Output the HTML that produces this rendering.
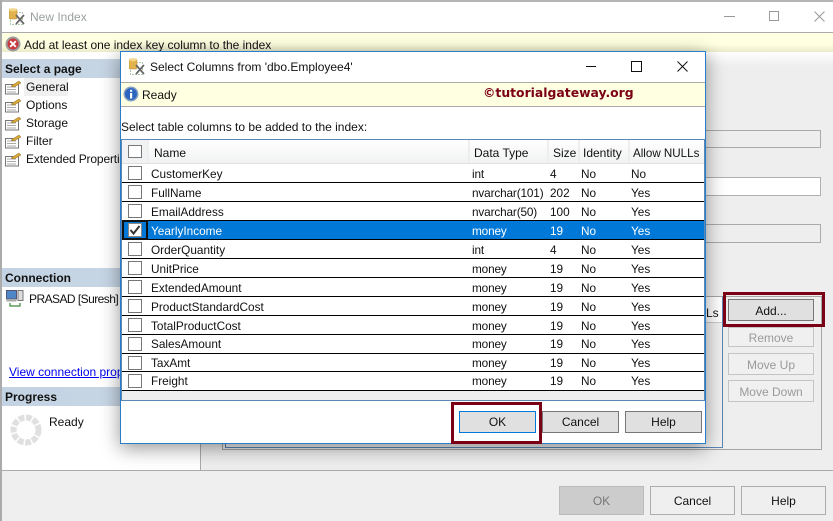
<!DOCTYPE html>
<html><head><meta charset="utf-8">
<style>
html,body{margin:0;padding:0}
body{width:833px;height:521px;overflow:hidden;position:relative;background:#fff;font:12px "Liberation Sans",sans-serif;color:#111}
div,span,svg,a{position:absolute;box-sizing:border-box;white-space:nowrap}
.t{line-height:14px}
.hd{left:2px;width:198px;height:19px;background:linear-gradient(90deg,#c3d3e3,#cad8e6);font-weight:bold;line-height:20px;padding-left:3px;color:#111}
.btn{background:#efefef;border:1px solid #adadad;text-align:center;color:#111;line-height:22px}
.dis{color:#9a9a9a;border-color:#c4c4c4;background:#f0f0f0}
.dbtn{background:#dfe0df;border:1px solid #777;text-align:center;line-height:20px;color:#111}
.row{left:0;width:583px;height:19px;border-bottom:1px solid #000;line-height:18px;background:#fff;font-size:11.8px}
.row span{top:3px;line-height:15px}
.low span{top:2px}
.row .c0{left:7px;top:2px;width:14px;height:14px;border:1px solid #777;background:#fff}
.c1{left:30px}.c2{left:351px;letter-spacing:-.15px}.c3{left:429px}.c4{left:460px}.c5{left:510px}
.hc{top:0;height:23px;background:linear-gradient(#fff,#f1f2f3);line-height:27px;color:#111;border-right:2px solid #eee}
.ni{left:5px}
</style></head><body>

<!-- outer window -->
<div style="left:0;top:0;width:833px;height:2px;background:#b5b5b5"></div>
<div style="left:0;top:0;width:2px;height:521px;background:#ababab"></div>
<svg style="left:9px;top:8px" width="17" height="17" viewBox="0 0 17 17"><rect x="1.500" y="4.500" width="12" height="12" fill="none" stroke="#5f8f5f" stroke-width="1" stroke-dasharray="1 2"/><rect x="0" y="1" width="8" height="10" rx="1" fill="#e2b24c" stroke="#b08a30" stroke-width=".5"/><ellipse cx="4" cy="1.800" rx="4" ry="1.600" fill="#f3d586"/><path d="M7 7l8 9M15 7l-8 9" stroke="#666" stroke-width="1.700"/></svg>
<span class="t" style="left:30px;top:10px;color:#9aa0a0;font-size:12px">New Index</span>
<div style="left:724px;top:16px;width:11px;height:1px;background:#999"></div>
<div style="left:769px;top:11px;width:10px;height:10px;border:1px solid #999"></div>
<svg style="left:814px;top:11px" width="11" height="11"><path d="M.5.5l10 10M10.500.5l-10 10" stroke="#999" stroke-width="1" fill="none"/></svg>

<div style="left:2px;top:32px;width:831px;height:1px;background:#aaa"></div>
<div style="left:2px;top:33px;width:831px;height:19px;background:linear-gradient(#ffffe1 60%,#ebebcb)"></div>
<svg style="left:5px;top:36px" width="16" height="16" viewBox="0 0 16 16"><circle cx="8" cy="8" r="7.500" fill="#9c9c9c"/><circle cx="8" cy="8" r="5.500" fill="#c8383c"/><path d="M5.200 5.200l5.600 5.600M10.800 5.200l-5.600 5.600" stroke="#fff" stroke-width="1.900"/></svg>
<span class="t" style="left:24px;top:38px;letter-spacing:-.02px">Add at least one index key column to the index</span>

<!-- left panel -->
<div class="hd" style="top:59px">Select a page</div>
<div style="left:24px;top:78px;width:44px;height:18px;background:#f0f0f0"></div>
<svg class="ni" style="top:80px" width="18" height="15" viewBox="0 0 18 15"><rect x=".5" y="4.500" width="13" height="9.500" fill="#fff" stroke="#777"/><path d="M2 7h9M2 9.500h9M2 12h9" stroke="#aaa"/><path d="M6 6l8-5 2 2-7 4z" fill="#d9a93a" stroke="#8a6a20" stroke-width=".5"/></svg>
<svg class="ni" style="top:98px" width="18" height="15" viewBox="0 0 18 15"><rect x=".5" y="4.500" width="13" height="9.500" fill="#fff" stroke="#777"/><path d="M2 7h9M2 9.500h9M2 12h9" stroke="#aaa"/><path d="M6 6l8-5 2 2-7 4z" fill="#d9a93a" stroke="#8a6a20" stroke-width=".5"/></svg>
<svg class="ni" style="top:116px" width="18" height="15" viewBox="0 0 18 15"><rect x=".5" y="4.500" width="13" height="9.500" fill="#fff" stroke="#777"/><path d="M2 7h9M2 9.500h9M2 12h9" stroke="#aaa"/><path d="M6 6l8-5 2 2-7 4z" fill="#d9a93a" stroke="#8a6a20" stroke-width=".5"/></svg>
<svg class="ni" style="top:134px" width="18" height="15" viewBox="0 0 18 15"><rect x=".5" y="4.500" width="13" height="9.500" fill="#fff" stroke="#777"/><path d="M2 7h9M2 9.500h9M2 12h9" stroke="#aaa"/><path d="M6 6l8-5 2 2-7 4z" fill="#d9a93a" stroke="#8a6a20" stroke-width=".5"/></svg>
<svg class="ni" style="top:152px" width="18" height="15" viewBox="0 0 18 15"><rect x=".5" y="4.500" width="13" height="9.500" fill="#fff" stroke="#777"/><path d="M2 7h9M2 9.500h9M2 12h9" stroke="#aaa"/><path d="M6 6l8-5 2 2-7 4z" fill="#d9a93a" stroke="#8a6a20" stroke-width=".5"/></svg>
<span class="t" style="left:26px;top:80px">General</span>
<span class="t" style="left:26px;top:98px">Options</span>
<span class="t" style="left:26px;top:116px">Storage</span>
<span class="t" style="left:26px;top:134px">Filter</span>
<span class="t" style="left:26px;top:152px;letter-spacing:-.15px">Extended Properties</span>

<div class="hd" style="top:268px">Connection</div>
<svg style="left:6px;top:290px" width="18" height="18" viewBox="0 0 18 18"><rect x=".5" y=".5" width="10" height="8.500" fill="#4f86c6" stroke="#557"/><rect x="12" y=".5" width="5" height="10" fill="#ddd" stroke="#777"/><rect x=".5" y="9" width="10" height="2.500" fill="#aaa"/><path d="M4 13v3h10v-3" fill="none" stroke="#3a8a3a" stroke-width="1.200"/></svg>
<span class="t" style="left:29px;top:292px;letter-spacing:-.55px">PRASAD [Suresh]</span>
<a style="left:9px;top:365px;color:#0000ee;text-decoration:underline;line-height:14px">View connection properties</a>

<div class="hd" style="top:387px">Progress</div>
<svg style="left:10px;top:414px" width="32" height="32" viewBox="0 0 32 32"><circle cx="16" cy="16" r="12.500" fill="none" stroke="#e0e0e0" stroke-width="6" stroke-dasharray="5.800 1.500"/></svg>
<span class="t" style="left:49px;top:415px">Ready</span>

<div style="left:200px;top:52px;width:1px;height:418px;background:#aaa"></div>

<!-- right panel -->
<div style="left:201px;top:52px;width:632px;height:418px;background:linear-gradient(#fff,#eee 14px,#eee)"></div>
<div style="left:700px;top:130px;width:121px;height:18px;background:#eee;border:1px solid #aaa"></div>
<div style="left:700px;top:177px;width:121px;height:19px;background:#fff;border:1px solid #b0b0b0"></div>
<div style="left:700px;top:224px;width:121px;height:19px;background:#eee;border:1px solid #aaa"></div>
<div style="left:222px;top:296px;width:600px;height:154px;border:1px solid #a5a5a5"></div>
<div style="left:225px;top:297px;width:498px;height:151px;border:1px solid #5b87b5;background:#f0f0f0"></div>
<div style="left:223px;top:297px;width:499px;height:26px;background:#fff;border-bottom:1px solid #ccc"></div>
<span class="t" style="left:706px;top:306px">Ls</span>

<div class="dbtn" style="left:728px;top:299px;width:86px;height:22px;line-height:22px">Add...</div>
<div style="left:723px;top:292px;width:102px;height:35px;border:3px solid #7b0016"></div>
<div class="btn dis" style="left:728px;top:327px;width:86px;height:20px;line-height:21px">Remove</div>
<div class="btn dis" style="left:728px;top:353px;width:86px;height:22px">Move Up</div>
<div class="btn dis" style="left:728px;top:380px;width:86px;height:22px">Move Down</div>

<!-- bottom bar -->
<div style="left:2px;top:470px;width:831px;height:51px;background:#efefef;border-top:1px solid #aaa"></div>
<div class="btn" style="left:559px;top:486px;width:85px;height:29px;background:#ccc;border-color:#bbb;color:#777;line-height:28px">OK</div>
<div class="btn" style="left:650px;top:486px;width:85px;height:29px;line-height:28px">Cancel</div>
<div class="btn" style="left:741px;top:486px;width:85px;height:29px;line-height:28px">Help</div>

<!-- dialog -->
<div style="left:120px;top:51px;width:586px;height:393px;background:#fff;border:1px solid #2a7dc8;box-shadow:0 4px 18px rgba(0,0,0,.42)">
  <svg style="left:8px;top:6px" width="17" height="17" viewBox="0 0 17 17"><rect x="1.500" y="4.500" width="12" height="12" fill="none" stroke="#5f8f5f" stroke-width="1" stroke-dasharray="1 2"/><rect x="0" y="1" width="8" height="10" rx="1" fill="#e2b24c" stroke="#b08a30" stroke-width=".5"/><ellipse cx="4" cy="1.800" rx="4" ry="1.600" fill="#f3d586"/><path d="M7 7l8 9M15 7l-8 9" stroke="#666" stroke-width="1.700"/></svg>
  <span class="t" style="left:29px;top:8px">Select Columns from 'dbo.Employee4'</span>
  <div style="left:465px;top:14px;width:10px;height:1px;background:#111"></div>
  <div style="left:510px;top:9px;width:11px;height:11px;border:1px solid #111"></div>
  <svg style="left:556px;top:9px" width="11" height="11"><path d="M.5.5l10 10M10.500.5l-10 10" stroke="#111" stroke-width="1" fill="none"/></svg>

  <div style="left:0;top:30px;width:584px;height:1px;background:#aaa"></div>
  <div style="left:0;top:31px;width:584px;height:24px;background:#ffffe1;border-bottom:1px solid #aaa"></div>
  <svg style="left:2px;top:34px" width="16" height="16" viewBox="0 0 16 16"><circle cx="8" cy="8" r="7.500" fill="#8aa0c0"/><circle cx="8" cy="8" r="6" fill="#2a66c0"/><rect x="7" y="7" width="2.200" height="5.500" fill="#fff"/><rect x="7" y="3.800" width="2.200" height="2" fill="#fff"/></svg>
  <span class="t" style="left:21px;top:36px">Ready</span>
  <span style="left:362px;top:33px;font:bold 12.400px/16px 'DejaVu Sans',sans-serif;color:#7b0016">©tutorialgateway.org</span>

  <span class="t" style="left:0;top:68px">Select table columns to be added to the index:</span>

  <!-- grid -->
  <div style="left:0;top:87px;width:584px;height:262px;background:#eee;border-top:1px solid #5b87b5;border-bottom:1px solid #5b87b5;border-right:1px solid #5b87b5">
    <div style="left:0;top:0;width:583px;height:24px;background:#e0e0e0"></div>
    <div class="hc" style="left:0;width:28px;background:#f1f2f3"></div>
    <div style="left:7px;top:5px;width:14px;height:13px;border:1px solid #777;background:#fff"></div>
    <div class="hc" style="left:28px;width:321px;padding-left:5px">Name</div>
    <div class="hc" style="left:349px;width:79px;padding-left:4px">Data Type</div>
    <div class="hc" style="left:428px;width:31px;padding-left:4px">Size</div>
    <div class="hc" style="left:459px;width:50px;padding-left:3px">Identity</div>
    <div class="hc" style="left:509px;width:74px;border-right:0;padding-left:3px;font-size:11.600px">Allow NULLs</div>

    <div class="row" style="top:24px"><span class="c0"></span><span class="c1">CustomerKey</span><span class="c2">int</span><span class="c3">4</span><span class="c4">No</span><span class="c5">No</span></div>
    <div class="row" style="top:43px"><span class="c0"></span><span class="c1">FullName</span><span class="c2">nvarchar(101)</span><span class="c3">202</span><span class="c4">No</span><span class="c5">Yes</span></div>
    <div class="row" style="top:62px"><span class="c0"></span><span class="c1">EmailAddress</span><span class="c2">nvarchar(50)</span><span class="c3">100</span><span class="c4">No</span><span class="c5">Yes</span></div>
    <div class="row" style="top:81px;background:#0078d7;color:#fff"><span class="c1">YearlyIncome</span><span class="c2">money</span><span class="c3">19</span><span class="c4">No</span><span class="c5">Yes</span>
      <div style="left:1px;top:-1px;width:26px;height:20px;border:2px solid #111"></div>
      <svg style="left:7px;top:2px" width="14" height="14"><rect x=".5" y=".5" width="13" height="13" fill="#fff" stroke="#888"/><path d="M2.500 7l3 3.500 6-7.500" fill="none" stroke="#333" stroke-width="2"/></svg>
    </div>
    <div class="row" style="top:100px"><span class="c0"></span><span class="c1">OrderQuantity</span><span class="c2">int</span><span class="c3">4</span><span class="c4">No</span><span class="c5">Yes</span></div>
    <div class="row" style="top:119px"><span class="c0"></span><span class="c1">UnitPrice</span><span class="c2">money</span><span class="c3">19</span><span class="c4">No</span><span class="c5">Yes</span></div>
    <div class="row" style="top:138px"><span class="c0"></span><span class="c1">ExtendedAmount</span><span class="c2">money</span><span class="c3">19</span><span class="c4">No</span><span class="c5">Yes</span></div>
    <div class="row" style="top:157px"><span class="c0"></span><span class="c1">ProductStandardCost</span><span class="c2">money</span><span class="c3">19</span><span class="c4">No</span><span class="c5">Yes</span></div>
    <div class="row" style="top:176px"><span class="c0"></span><span class="c1">TotalProductCost</span><span class="c2">money</span><span class="c3">19</span><span class="c4">No</span><span class="c5">Yes</span></div>
    <div class="row low" style="top:195px"><span class="c0"></span><span class="c1">SalesAmount</span><span class="c2">money</span><span class="c3">19</span><span class="c4">No</span><span class="c5">Yes</span></div>
    <div class="row low" style="top:214px;height:18px"><span class="c0"></span><span class="c1">TaxAmt</span><span class="c2">money</span><span class="c3">19</span><span class="c4">No</span><span class="c5">Yes</span></div>
    <div class="row low" style="top:232px"><span class="c0"></span><span class="c1">Freight</span><span class="c2">money</span><span class="c3">19</span><span class="c4">No</span><span class="c5">Yes</span></div>
    <div style="left:0;top:0;width:1px;height:260px;background:#5b87b5"></div>
  </div>

  <div class="dbtn" style="left:338px;top:359px;width:77px;height:22px;border-color:#0078d7">OK</div>
  <div class="dbtn" style="left:421px;top:359px;width:77px;height:22px">Cancel</div>
  <div class="dbtn" style="left:504px;top:359px;width:77px;height:22px">Help</div>
  <div style="left:330px;top:350px;width:91px;height:42px;border:3px solid #7b0016"></div>
</div>
</body></html>
